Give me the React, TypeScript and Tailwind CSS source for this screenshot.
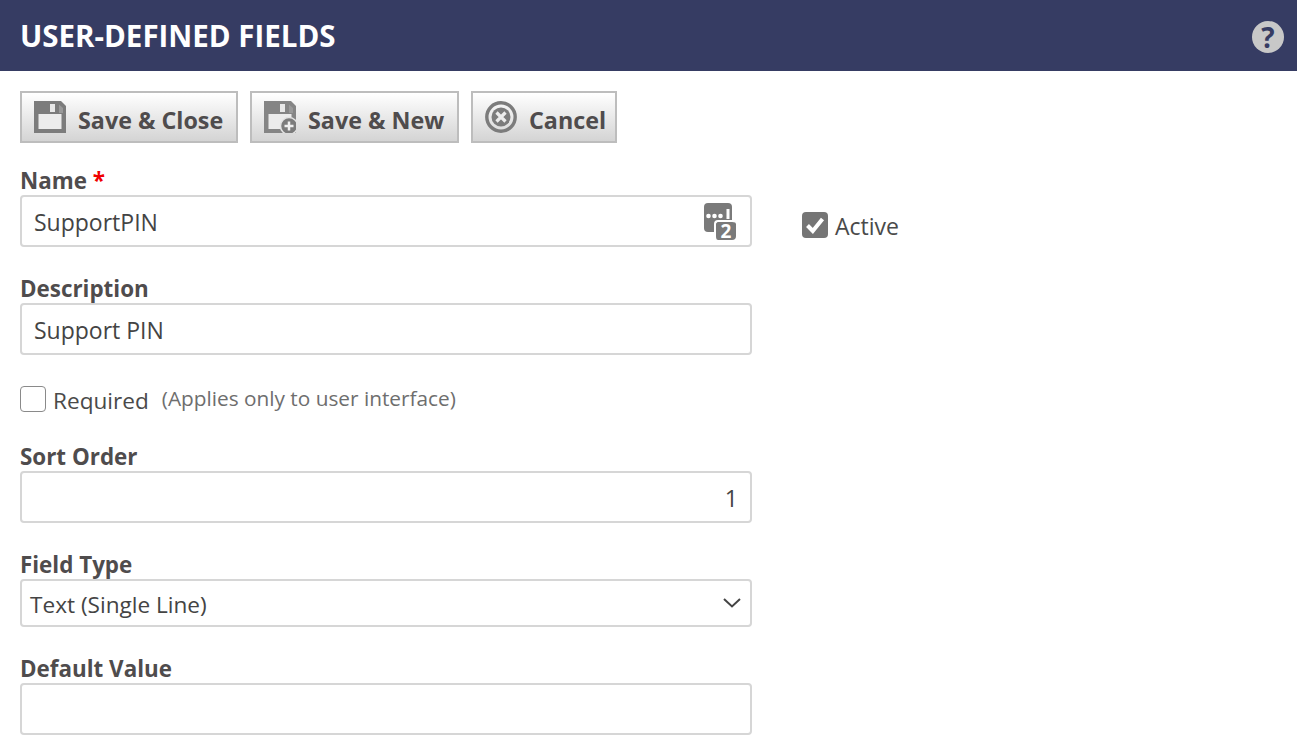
import React from "react";

function SaveIcon({ plus }: { plus?: boolean }) {
  return (
    <svg width="32" height="32" viewBox="0 0 32 32" className="shrink-0">
      <path d="M0 0H27L32 5V32H0Z" fill={plus ? "#858585" : "#7c7c7c"} />
      <path d="M16 3H21V11H16Z" fill="#e8e8e8" />
      <path d="M25 3.5L29 7V12H25Z" fill="#999999" />
      <path d="M4.5 13H27.5V28H4.5Z" fill="#ececec" />
      {plus && (
        <g>
          <circle cx="25" cy="25" r="8.5" fill="#7c7c7c" stroke="#e4e4e4" strokeWidth="1.5" />
          <path d="M20.5 25H29.5M25 20.5V29.5" stroke="#efefef" strokeWidth="2.5" />
        </g>
      )}
    </svg>
  );
}

function CancelIcon() {
  return (
    <svg width="32" height="32" viewBox="0 0 32 32" className="shrink-0">
      <circle cx="16" cy="16" r="14.2" fill="none" stroke="#7c7c7c" strokeWidth="3.4" />
      <circle cx="16" cy="16" r="9.5" fill="#7c7c7c" />
      <path d="M11.5 11.5L20.5 20.5M20.5 11.5L11.5 20.5" stroke="#ececec" strokeWidth="3.2" />
    </svg>
  );
}

function Btn({ icon, label, w }: { icon: React.ReactNode; label: string; w: string }) {
  return (
    <button className={`${w} h-[52px] flex items-center pl-[12px] gap-[12px] border-2 border-[#bdbdbd] bg-gradient-to-b from-white to-[#d4d4d4] text-[23.3px] font-bold text-[#4f4c4d]`}>
      {icon}
      <span className="leading-none pt-[8px]">{label}</span>
    </button>
  );
}

function Label({ children }: { children: React.ReactNode }) {
  return <div className="h-[26px] text-[22.4px] leading-[24px] font-bold text-[#4f4c4d]">{children}</div>;
}

function Input({ value, right, children }: { value?: string; right?: boolean; children?: React.ReactNode }) {
  return (
    <div className={`relative w-[732px] h-[52px] border-2 border-[#d6d6d6] rounded-[4px] flex items-center px-[12px] pt-[3px] text-[23px] text-[#444] ${right ? "justify-end" : ""}`}>
      {value}
      {children}
    </div>
  );
}

export default function App() {
  return (
    <div className="w-[1297px] h-[747px] overflow-hidden bg-white font-['Open_Sans',sans-serif]">
      <div className="h-[71px] bg-[#363c63] flex items-center justify-between pl-[20px] pr-[13px]">
        <div className="pt-[2px] text-[29.5px] font-bold text-white">USER-DEFINED FIELDS</div>
        <div className="mt-[3px] w-[32px] h-[32px] rounded-full bg-[#c8c8c8] flex items-center justify-center text-[28px] leading-none font-bold text-[#363c63]">?</div>
      </div>

      <div className="pl-[20px]">
        <div className="mt-[20px] flex gap-[12px]">
          <Btn w="w-[218px]" icon={<SaveIcon />} label="Save & Close" />
          <Btn w="w-[209px]" icon={<SaveIcon plus />} label="Save & New" />
          <Btn w="w-[146px]" icon={<CancelIcon />} label="Cancel" />
        </div>

        <div className="mt-[26px]">
          <Label>Name <span className="text-[#f00000]">*</span></Label>
        </div>
        <div className="flex items-center">
          <Input value="SupportPIN">
            <div className="absolute right-[14px] top-[6px] w-[32px] h-[37px]">
              <svg width="28" height="29" viewBox="0 0 28 29" className="block">
                <rect x="0" y="0" width="28" height="29" rx="4" fill="#7a7a7a" />
                <circle cx="4.5" cy="13" r="2.3" fill="#fff" />
                <circle cx="10.5" cy="13" r="2.3" fill="#fff" />
                <circle cx="16.5" cy="13" r="2.3" fill="#fff" />
                <rect x="22.5" y="6" width="3" height="10" fill="#fff" />
              </svg>
              <span className="absolute right-0 bottom-0 w-[22px] h-[20px] rounded-[4px] border-l-2 border-t-2 border-white bg-[#7a7a7a] flex items-center justify-center text-[19px] leading-none font-bold text-white">2</span>
            </div>
          </Input>
          <div className="ml-[50px] mt-[8px] flex items-center gap-[7px] text-[23px] text-[#4a4a4a]">
            <span className="w-[26px] h-[26px] rounded-[4px] bg-[#757575] flex items-center justify-center">
              <svg width="22" height="22" viewBox="0 0 22 22"><path d="M3.5 11.5L8.8 17L18.5 5" fill="none" stroke="#fff" strokeWidth="4" /></svg>
            </span>
            <span className="pt-[2px]">Active</span>
          </div>
        </div>

        <div className="mt-[30px]"><Label>Description</Label></div>
        <Input value="Support PIN" />

        <div className="mt-[31px] flex items-center h-[26px]">
          <span className="w-[26px] h-[26px] border-[1.5px] border-[#8a8a8a] rounded-[4px] bg-white" />
          <span className="ml-[7px] pt-[3px] text-[22.6px] text-[#4a4a4a]">Required</span>
          <span className="ml-[13px] text-[20.8px] text-[#6e6e6e]">(Applies only to user interface)</span>
        </div>

        <div className="mt-[33px]"><Label>Sort Order</Label></div>
        <Input value="1" right />

        <div className="mt-[30px]"><Label>Field Type</Label></div>
        <div className="relative w-[732px] h-[48px] border-2 border-[#d6d6d6] rounded-[4px] flex items-center pl-[8px] pt-[3px] text-[22.6px] text-[#444]">
          Text (Single Line)
          <svg width="18" height="10" viewBox="0 0 18 10" className="absolute right-[9px] top-[17px]">
            <path d="M1 1L9 8.5L17 1" fill="none" stroke="#444" strokeWidth="2" />
          </svg>
        </div>

        <div className="mt-[30px]"><Label>Default Value</Label></div>
        <Input />
      </div>
    </div>
  );
}
